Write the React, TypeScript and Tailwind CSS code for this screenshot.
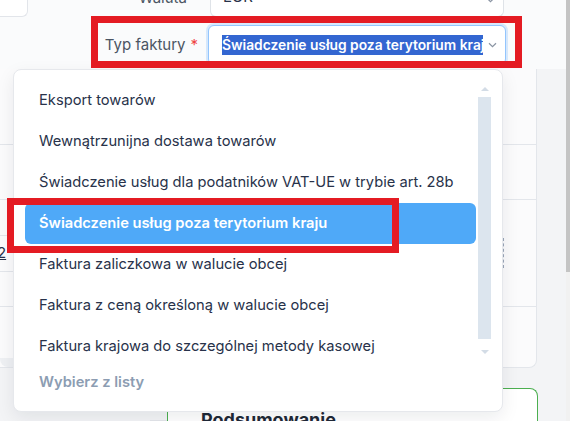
const items = [
  "Eksport towarów",
  "Wewnątrzunijna dostawa towarów",
  "Świadczenie usług dla podatników VAT-UE w trybie art. 28b",
  "Świadczenie usług poza terytorium kraju",
  "Faktura zaliczkowa w walucie obcej",
  "Faktura z ceną określoną w walucie obcej",
  "Faktura krajowa do szczególnej metody kasowej",
];

const Chevron = () => (
  <svg width="9" height="6" viewBox="0 0 9 6" fill="none">
    <path d="M1 1.2 4.5 4.6 8 1.2" stroke="#8a94a3" strokeWidth="1.2" />
  </svg>
);

const Dropdown = () => {
  return (
    <div className="absolute left-[13px] top-[69px] w-[490px] h-[343px] bg-white rounded-lg border border-[#e6e8ec] shadow-[0_6px_18px_rgba(15,23,42,0.08)] flex text-[14.7px]">
      <div className="flex-1 pt-[10px] pl-[11px]">
        {items.map((t, i) => (
          <div
            key={t}
            className={
              i === 3
                ? "h-[41px] flex items-center pl-[14px] whitespace-nowrap rounded-md bg-[#4fa9f8] text-white font-semibold"
                : "h-[41px] flex items-center pl-[14px] whitespace-nowrap text-[#28324a]"
            }
          >
            {t}
          </div>
        ))}
        <div className="h-[31px] flex items-center pl-[14px] text-[#8c9db2] font-semibold">
          Wybierz z listy
        </div>
      </div>
      <div className="w-[13px] ml-[2px] mr-[11px] flex flex-col items-center">
        <div className="h-[17px]" />
        <svg width="8" height="4" viewBox="0 0 8 4">
          <path d="M0 4 4 0 8 4Z" fill="#d3dce6" />
        </svg>
        <div className="h-[6px]" />
        <div className="w-[13px] h-[242px] bg-[#dce5ee]" />
        <div className="h-[11px]" />
        <svg width="8" height="4" viewBox="0 0 8 4">
          <path d="M0 0 8 0 4 4Z" fill="#d3dce6" />
        </svg>
      </div>
    </div>
  );
};

export default function App() {
  return (
    <div className="w-[570px] h-[421px] relative overflow-hidden flex bg-[#f3f4f6] text-[15px] font-['Inter',sans-serif]">
      <div className="w-[566px] flex flex-col">
        {/* form header */}
        <div className="h-[69px] shrink-0 bg-[#fafbfc] flex flex-col">
          <div className="h-[17px] flex">
            <div className="w-[28px] h-full bg-white border-r border-b border-[#e2e5ea] rounded-br-md" />
            <div className="w-[159px] flex justify-end items-end">
              <span className="leading-none text-[#4b5563] translate-y-[-12px]">Waluta</span>
            </div>
            <div className="ml-[23px] w-[294px] h-full bg-white border-x border-b border-[#dfe3e8] rounded-b-md flex items-end justify-between pl-[12px] pr-[8px]">
              <span className="leading-none text-[#28324a] translate-y-[-12px]">EUR</span>
              <span className="translate-y-[-13px]">
                <Chevron />
              </span>
            </div>
          </div>
          <div className="mt-[8px] flex">
            <div className="w-[198px] flex justify-end items-center h-[40px] text-[#4b5563]">
              Typ faktury<span className="ml-[5px] text-[#ef4444]">*</span>
            </div>
            <div className="ml-[10px] w-[298px] h-[40px] bg-white border border-[#93c5fd] rounded-md shadow-[0_0_0_2px_rgba(147,197,253,0.35)] flex items-center pl-[13px] pr-[8px]">
              <div className="flex-1 overflow-hidden whitespace-nowrap">
                <span className="bg-[#3366d1] text-white text-[13.8px] font-semibold leading-[20px] inline-block">
                  Świadczenie usług poza terytorium kraju
                </span>
              </div>
              <div className="ml-[5px]">
                <Chevron />
              </div>
            </div>
          </div>
        </div>

        {/* table card */}
        <div className="w-[537px] h-[299px] shrink-0 bg-[#fbfbfc] border-r border-b border-[#e3e6eb] rounded-br-lg flex flex-col">
          <div className="h-[76px] border-b border-[#e3e6eb]" />
          <div className="h-[55px] border-b border-[#e3e6eb]" />
          <div className="h-[36px] w-[180px] border-b border-[#e3e6eb]" />
          <div className="h-[36px] flex justify-between items-start">
            <div className="w-[180px] h-full border-b border-[#e3e6eb] flex items-center">
              <span className="-ml-[3px] underline text-[#28324a]">2</span>
            </div>
            <div className="mr-[32px] mt-[2px] h-[30px] border-l border-dashed border-[#9aa6b8]" />
          </div>
          <div className="h-[35px] border-b border-[#e3e6eb]" />
          <div className="h-[51px]" />
          <div className="flex-1 w-[180px] bg-[#eef0f3] rounded-bl-lg" />
        </div>

        {/* summary */}
        <div className="mt-[20px] flex flex-1">
          <div className="w-[167px] flex flex-col justify-end">
            <div className="ml-[150px] h-[9px] bg-[#e4e6ea]" />
          </div>
          <div className="w-[371px] bg-white border-t border-x border-[#4caf50] rounded-tr-lg pl-[33px] pt-[22px]">
            <div className="text-[18px] font-bold text-[#1f2937] leading-none">Podsumowanie</div>
          </div>
        </div>
      </div>

      <div className="w-[4px] flex flex-col bg-[#f1f1f1]">
        <div className="h-[272px] bg-[#c4c4c4]" />
      </div>

      <Dropdown />

      <div className="absolute left-[91px] top-[16px] w-[431px] h-[52px] border-[7px] border-[#e41b23]" />
      <div className="absolute left-[7px] top-[198px] w-[392px] h-[55px] border-[7px] border-[#e41b23]" />
    </div>
  );
}
